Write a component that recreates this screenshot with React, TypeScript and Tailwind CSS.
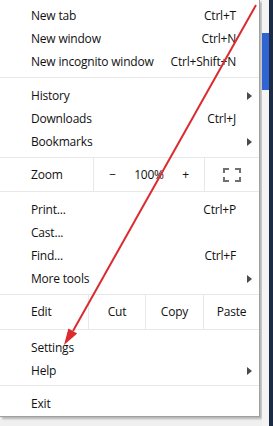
import React from "react";

type Item = { label: string; shortcut?: string; sub?: boolean };

const font = { fontFamily: '"Open Sans", "Noto Sans", sans-serif' };

function SubArrow() {
  return (
    <svg width="5" height="8" viewBox="0 0 5 8" className="absolute right-[7px] top-[8px]">
      <path d="M0 0 L5 4 L0 8 Z" fill="#4a4a4a" />
    </svg>
  );
}

function Row({ label, shortcut, sub }: Item) {
  return (
    <div className="relative h-[23px] flex items-center pl-[31px] pr-[23px]">
      <span className="flex-1">{label}</span>
      {shortcut && <span>{shortcut}</span>}
      {sub && <SubArrow />}
    </div>
  );
}

function Section({ items, pt = "pt-[6px]", pb = "pb-[4px]" }: { items: Item[]; pt?: string; pb?: string }) {
  return (
    <div className={`${pt} ${pb} border-b border-[#e8e8e8]`}>
      {items.map((it) => (
        <Row key={it.label} {...it} />
      ))}
    </div>
  );
}

function FullscreenIcon() {
  return (
    <svg width="18" height="14" viewBox="0 0 18 14">
      <g fill="none" stroke="#707070" strokeWidth="2">
        <path d="M1 5 V1 H6" />
        <path d="M12 1 H17 V5" />
        <path d="M17 9 V13 H12" />
        <path d="M6 13 H1 V9" />
      </g>
    </svg>
  );
}

export default function App() {
  return (
    <div className="relative w-[273px] h-[426px] overflow-hidden bg-[#f0f0f0] text-[12px] tracking-[-0.2px] text-[#111]" style={font}>
      <div className="flex h-full">
        <div className="w-[262px] shrink-0">
          <div className="w-[260px] bg-white border-r border-b border-[#a0a0a0] shadow-[2px_2px_2px_rgba(0,0,0,0.25)]">
            <Section
              pt="pt-[4px]"
              items={[
                { label: "New tab", shortcut: "Ctrl+T" },
                { label: "New window", shortcut: "Ctrl+N" },
                { label: "New incognito window", shortcut: "Ctrl+Shift+N" },
              ]}
            />
            <Section
              items={[
                { label: "History", sub: true },
                { label: "Downloads", shortcut: "Ctrl+J" },
                { label: "Bookmarks", sub: true },
              ]}
            />
            <div className="flex h-[34px] border-b border-[#e8e8e8]">
              <div className="w-[93px] flex items-center pl-[31px]">Zoom</div>
              <div className="w-[112px] flex border-l border-r border-[#e8e8e8]">
                <div className="w-[37px] flex items-center justify-center">−</div>
                <div className="w-[36px] flex items-center justify-center">100%</div>
                <div className="w-[37px] flex items-center justify-center">+</div>
              </div>
              <div className="flex-1 flex items-center justify-center">
                <FullscreenIcon />
              </div>
            </div>
            <Section
              items={[
                { label: "Print...", shortcut: "Ctrl+P" },
                { label: "Cast..." },
                { label: "Find...", shortcut: "Ctrl+F" },
                { label: "More tools", sub: true },
              ]}
            />
            <div className="flex h-[35px] border-b border-[#e8e8e8]">
              <div className="w-[88px] flex items-center pl-[31px]">Edit</div>
              <div className="w-[57px] flex items-center justify-center border-l border-[#e8e8e8]">Cut</div>
              <div className="w-[58px] flex items-center justify-center border-l border-[#e8e8e8]">Copy</div>
              <div className="flex-1 flex items-center justify-center border-l border-[#e8e8e8]">Paste</div>
            </div>
            <Section
              items={[
                { label: "Settings" },
                { label: "Help", sub: true },
              ]}
              pb="pb-[3px]"
            />
            <div className="pt-[6px] pb-[1px]">
              <Row label="Exit" />
            </div>
          </div>
        </div>
        <div className="w-[7px] flex flex-col bg-[#f4f4f4]">
          <div className="h-[33px]" />
          <div className="h-[57px] bg-[#2f64d2]" />
        </div>
        <div className="flex-1 bg-[#1d2a44]" />
      </div>

      <svg className="absolute inset-0 pointer-events-none" width="273" height="426" viewBox="0 0 273 426">
        <line x1="256" y1="5" x2="73" y2="331" stroke="#dc2b2f" strokeWidth="2" />
        <path d="M64 345 L68.4 328.6 L77.2 333.4 Z" fill="#dc2b2f" />
      </svg>
    </div>
  );
}
